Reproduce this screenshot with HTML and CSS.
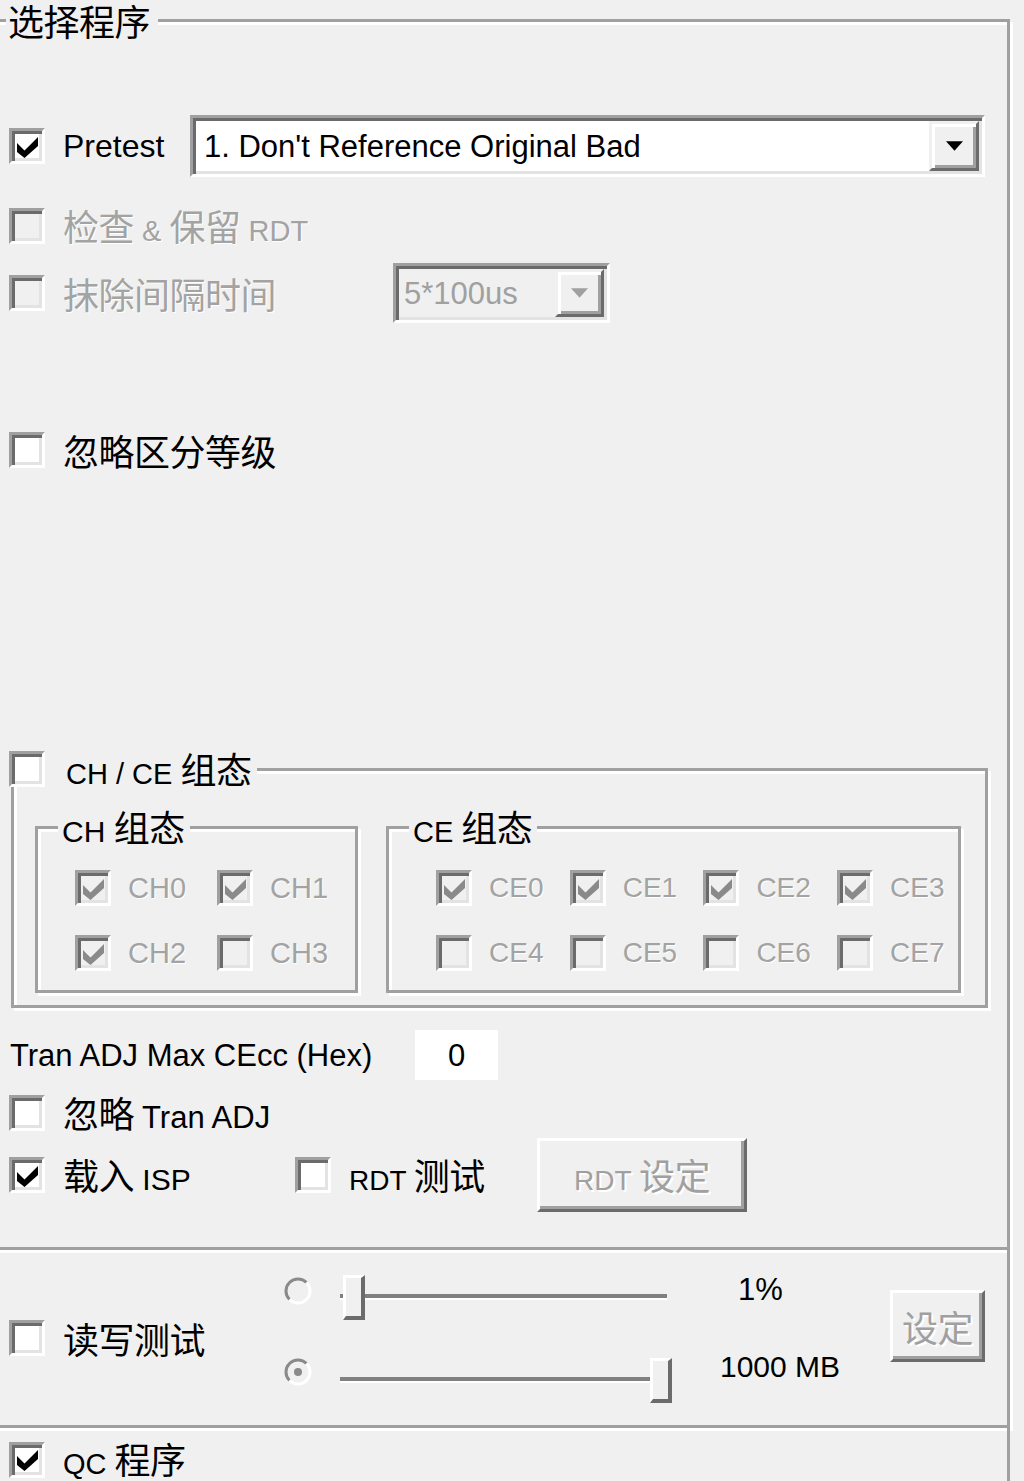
FILE: index.html
```html
<!DOCTYPE html>
<html lang="zh-CN">
<head>
<meta charset="utf-8">
<title>选择程序</title>
<link rel="stylesheet" href="styles.css">
</head>
<body>
<div class="group outer">
  <div class="gtitle outer-title"><span class="zh">选择程序</span></div>

  <div class="row r-pretest">
    <div class="chk w-pretest">
      <span class="box"><svg class="tick" viewBox="0 0 7 7"><polygon points="0,2 2.5,4.5 7,0 7,3 2.5,7 0,5"/></svg></span>
      <span class="f32">Pretest</span>
    </div>
    <div class="combo combo-main">
      <span class="combo-text">1. Don't Reference Original Bad</span>
      <span class="ddbtn"><svg class="tri" viewBox="0 0 7 4"><polygon points="0,0 7,0 3.5,4"/></svg></span>
    </div>
  </div>

  <div class="row r-check">
    <div class="chk dis">
      <span class="box"></span>
      <span class="f29"><span class="zh">检查</span> &amp; <span class="zh">保留</span> RDT</span>
    </div>
  </div>

  <div class="row r-erase">
    <div class="chk dis w-erase">
      <span class="box"></span>
      <span class="zh">抹除间隔时间</span>
    </div>
    <div class="combo combo-small">
      <span class="combo-text">5*100us</span>
      <span class="ddbtn"><svg class="tri" viewBox="0 0 7 4"><polygon points="0,0 7,0 3.5,4"/></svg></span>
    </div>
  </div>

  <div class="row r-ignore">
    <div class="chk">
      <span class="box"></span>
      <span class="zh">忽略区分等级</span>
    </div>
  </div>

  <div class="group chce">
    <div class="gtitle chce-title chk">
      <span class="box"></span>
      <span class="f29">CH / CE <span class="zh">组态</span></span>
    </div>
    <div class="subs">
      <div class="group sub sub-ch">
        <div class="gtitle sub-title"><span class="f30">CH <span class="zh">组态</span></span></div>
        <div class="grid grid-ch">
          <div class="chk small dis"><span class="box"><svg class="tick" viewBox="0 0 7 7"><polygon points="0,2 2.5,4.5 7,0 7,3 2.5,7 0,5"/></svg></span><span>CH0</span></div>
          <div class="chk small dis"><span class="box"><svg class="tick" viewBox="0 0 7 7"><polygon points="0,2 2.5,4.5 7,0 7,3 2.5,7 0,5"/></svg></span><span>CH1</span></div>
          <div class="chk small dis"><span class="box"><svg class="tick" viewBox="0 0 7 7"><polygon points="0,2 2.5,4.5 7,0 7,3 2.5,7 0,5"/></svg></span><span>CH2</span></div>
          <div class="chk small dis"><span class="box"></span><span>CH3</span></div>
        </div>
      </div>
      <div class="group sub sub-ce">
        <div class="gtitle sub-title"><span class="f29">CE <span class="zh">组态</span></span></div>
        <div class="grid grid-ce">
          <div class="chk small dis"><span class="box"><svg class="tick" viewBox="0 0 7 7"><polygon points="0,2 2.5,4.5 7,0 7,3 2.5,7 0,5"/></svg></span><span>CE0</span></div>
          <div class="chk small dis"><span class="box"><svg class="tick" viewBox="0 0 7 7"><polygon points="0,2 2.5,4.5 7,0 7,3 2.5,7 0,5"/></svg></span><span>CE1</span></div>
          <div class="chk small dis"><span class="box"><svg class="tick" viewBox="0 0 7 7"><polygon points="0,2 2.5,4.5 7,0 7,3 2.5,7 0,5"/></svg></span><span>CE2</span></div>
          <div class="chk small dis"><span class="box"><svg class="tick" viewBox="0 0 7 7"><polygon points="0,2 2.5,4.5 7,0 7,3 2.5,7 0,5"/></svg></span><span>CE3</span></div>
          <div class="chk small dis"><span class="box"></span><span>CE4</span></div>
          <div class="chk small dis"><span class="box"></span><span>CE5</span></div>
          <div class="chk small dis"><span class="box"></span><span>CE6</span></div>
          <div class="chk small dis"><span class="box"></span><span>CE7</span></div>
        </div>
      </div>
    </div>
  </div>

  <div class="row r-tran">
    <span class="tran-label">Tran ADJ Max CEcc (Hex)</span>
    <span class="edit">0</span>
  </div>

  <div class="row r-ignore-tran">
    <div class="chk">
      <span class="box"></span>
      <span><span class="zh">忽略</span> Tran ADJ</span>
    </div>
  </div>

  <div class="row r-isp">
    <div class="chk w-isp">
      <span class="box"><svg class="tick" viewBox="0 0 7 7"><polygon points="0,2 2.5,4.5 7,0 7,3 2.5,7 0,5"/></svg></span>
      <span class="f30"><span class="zh">载入</span> ISP</span>
    </div>
    <div class="chk w-rdt">
      <span class="box"></span>
      <span class="f28">RDT <span class="zh">测试</span></span>
    </div>
    <div class="btn btn-rdt dis-text"><span class="f28">RDT <span class="zh">设定</span></span></div>
  </div>
</div>

<div class="rw">
  <div class="chk w-rw">
    <span class="box"></span>
    <span class="zh">读写测试</span>
  </div>
  <div class="rw-grid">
    <div class="srow">
      <svg class="radio r1" viewBox="0 0 32 32"><circle cx="16" cy="16" r="12" fill="#f0f0f0"/><path d="M7.5 24.5 A12 12 0 0 1 24.5 7.5" fill="none" stroke="#8a8a8a" stroke-width="3"/><path d="M24.5 7.5 A12 12 0 0 1 7.5 24.5" fill="none" stroke="#fff" stroke-width="3"/></svg>
      <div class="slider">
        <span class="track t-a"></span><span class="thumb"></span><span class="track t-b"></span>
      </div>
      <span class="val v1">1%</span>
    </div>
    <div class="srow">
      <svg class="radio r2" viewBox="0 0 32 32"><circle cx="16" cy="16" r="12" fill="#f0f0f0"/><path d="M7.5 24.5 A12 12 0 0 1 24.5 7.5" fill="none" stroke="#8a8a8a" stroke-width="3"/><path d="M24.5 7.5 A12 12 0 0 1 7.5 24.5" fill="none" stroke="#fff" stroke-width="3"/><circle cx="16" cy="16" r="4" fill="#8a8a8a"/></svg>
      <div class="slider">
        <span class="track t-c"></span><span class="thumb"></span>
      </div>
      <span class="val v2">1000 MB</span>
    </div>
  </div>
  <div class="btn btn-set dis-text"><span class="zh">设定</span></div>
</div>

<div class="qc">
  <div class="chk">
    <span class="box"><svg class="tick" viewBox="0 0 7 7"><polygon points="0,2 2.5,4.5 7,0 7,3 2.5,7 0,5"/></svg></span>
    <span class="f29">QC <span class="zh">程序</span></span>
  </div>
</div>
</body>
</html>
```

FILE: styles.css
```css
* { box-sizing: border-box; }
html, body { margin: 0; padding: 0; }
body {
  background: #f0f0f0;
  width: 1024px;
  height: 1481px;
  overflow: hidden;
  font-family: "Liberation Sans", "Noto Sans CJK SC", sans-serif;
  font-size: 31px;
  line-height: 1;
  color: #000;
}
.zh {
  display: inline-block;
  font-family: "Noto Sans CJK SC", sans-serif;
  font-size: 36px;
  line-height: 1;
  letter-spacing: -0.5px;
}
.f28 { font-size: 28px; }
.f29 { font-size: 29px; }
.f30 { font-size: 30px; }
.f32 { font-size: 32px; }

/* group boxes (etched) */
.group {
  border: 3px solid #a0a0a0;
  box-shadow: inset 3px 3px 0 #fff, 3px 3px 0 #fff;
}
.gtitle {
  display: flex;
  align-items: center;
  width: max-content;
  background: #f0f0f0;
}
.outer {
  margin: 19px 0 0 -8px;
  width: 1018px;
  height: 1231px;
  padding: 0 0 0 14px;
}
.outer-title {
  height: 40px;
  margin: -22px 0 0 -3px;
  padding: 0 8px 0 2px;
}

.row { display: flex; align-items: center; }

/* checkbox */
.chk { display: flex; align-items: center; gap: 18px; }
.chk.small { gap: 17px; font-size: 29px; }
.box {
  width: 36px;
  height: 36px;
  flex: none;
  border-style: solid;
  border-width: 3px;
  border-color: #a0a0a0 #fff #fff #a0a0a0;
  box-shadow: inset 3px 3px 0 #6b6b6b, inset -3px -3px 0 #e3e3e3;
  background: #fff;
  display: flex;
  align-items: center;
  justify-content: center;
}
.tick { width: 21px; height: 21px; fill: #000; margin: 2px 0 0 1px; }
.dis { color: #a3a3a3; text-shadow: 1px 1px 0 #fff; }
.dis .box { background: #f0f0f0; }
.dis .tick { fill: #8a8a8a; }
.dis-text { color: #a0a0a0; text-shadow: 2px 2px 0 #fff; }

/* combo boxes */
.combo {
  display: flex;
  border-style: solid;
  border-width: 3px;
  border-color: #a0a0a0 #fff #fff #a0a0a0;
  box-shadow: inset 3px 3px 0 #6b6b6b, inset -3px -3px 0 #e3e3e3;
  background: #fff;
  padding: 3px;
}
.combo-text { flex: 1; display: flex; align-items: center; padding-left: 8px; }
.ddbtn {
  flex: none;
  width: 50px;
  background: #f0f0f0;
  border-style: solid;
  border-width: 3px;
  border-color: #f0f0f0 #6b6b6b #6b6b6b #f0f0f0;
  box-shadow: inset 3px 3px 0 #fff, inset -3px -3px 0 #a0a0a0;
  display: flex;
  align-items: center;
  justify-content: center;
}
.tri { width: 17px; height: 10px; fill: #000; }

.r-pretest { margin-top: 75px; height: 62px; }
.w-pretest { width: 181px; }
.combo-main { width: 795px; height: 62px; }

.r-check { margin-top: 31px; height: 36px; }

.r-erase { margin-top: 19px; height: 60px; }
.w-erase { width: 384px; }
.combo-small { width: 217px; height: 60px; background: #f0f0f0; color: #a0a0a0; }
.combo-small .combo-text { padding-left: 5px; }
.combo-small .ddbtn { width: 49px; }
.combo-small .tri { fill: #a0a0a0; }

.r-ignore { margin-top: 109px; height: 36px; }

/* CH / CE group */
.chce {
  margin: 300px 0 0 2px;
  width: 977px;
  height: 240px;
}
.chce-title {
  height: 36px;
  margin: -20px 0 0 -5px;
  padding-right: 6px;
  gap: 21px;
}
.subs { display: flex; gap: 28px; margin: 39px 0 0 21px; }
.sub { height: 167px; }
.sub-ch { width: 323px; }
.sub-ce { width: 575px; }
.sub-title {
  height: 40px;
  margin: -22px 0 0 20px;
  padding: 0 5px 0 4px;
}
.grid { display: grid; row-gap: 29px; margin-top: 23px; }
.grid-ch { grid-template-columns: repeat(2, 142px); margin-left: 37px; }
.grid-ce { grid-template-columns: repeat(4, 133.7px); margin-left: 47px; }
.grid-ce .chk { font-size: 28px; }

/* tran adj */
.r-tran { margin-top: 22px; height: 50px; }
.tran-label { width: 406px; padding-left: 1px; }
.edit {
  width: 83px;
  height: 50px;
  background: #fff;
  display: flex;
  align-items: center;
  justify-content: center;
}
.r-ignore-tran { margin-top: 15px; height: 36px; }

.r-isp { margin-top: 7px; height: 74px; }
.w-isp { width: 286px; }
.w-rdt { width: 242px; }

/* buttons */
.btn {
  background: #f0f0f0;
  border-style: solid;
  border-width: 3px;
  border-color: #fff #6b6b6b #6b6b6b #fff;
  box-shadow: inset -3px -3px 0 #a0a0a0;
  display: flex;
  align-items: center;
  justify-content: center;
}
.btn-rdt { width: 210px; height: 74px; }

/* read / write test */
.rw {
  margin-left: -8px;
  width: 1018px;
  height: 178px;
  border-right: 3px solid #a0a0a0;
  border-bottom: 3px solid #a0a0a0;
  box-shadow: 3px 3px 0 #fff;
  padding: 0 22px 0 17px;
  display: flex;
  align-items: center;
}
.w-rw { width: 273px; align-self: center; }
.rw-grid {
  align-self: flex-start;
  margin-top: 24px;
  display: flex;
  flex-direction: column;
  gap: 37px;
}
.srow { display: flex; align-items: center; height: 46px; }
.radio { width: 32px; height: 32px; flex: none; margin-right: 26px; align-self: flex-start; }
.r1 { margin-top: 1px; }
.r2 { margin-top: -1px; }
.slider { width: 332px; height: 46px; display: flex; align-items: center; flex: none; }
.track {
  height: 6px;
  border-top: 4px solid #808080;
  border-bottom: 2px solid #fff;
}
.t-a { width: 3px; }
.t-b { width: 302px; }
.t-c { width: 310px; }
.thumb {
  width: 22px;
  height: 45px;
  flex: none;
  background: #f0f0f0;
  border-style: solid;
  border-width: 3px 4px 4px 3px;
  border-color: #fff #6b6b6b #6b6b6b #fff;
}
.val { align-self: flex-start; line-height: 32px; white-space: nowrap; }
.v1 { margin: 0 0 0 66px; }
.v2 { margin: -6px 0 0 48px; font-size: 30px; }
.btn-set {
  width: 95px;
  height: 72px;
  margin-left: auto;
  align-self: flex-start;
  margin-top: 40px;
}

.qc {
  margin-left: -8px;
  width: 1018px;
  height: 60px;
  border-right: 3px solid #a0a0a0;
  padding: 12px 0 0 17px;
}
```
